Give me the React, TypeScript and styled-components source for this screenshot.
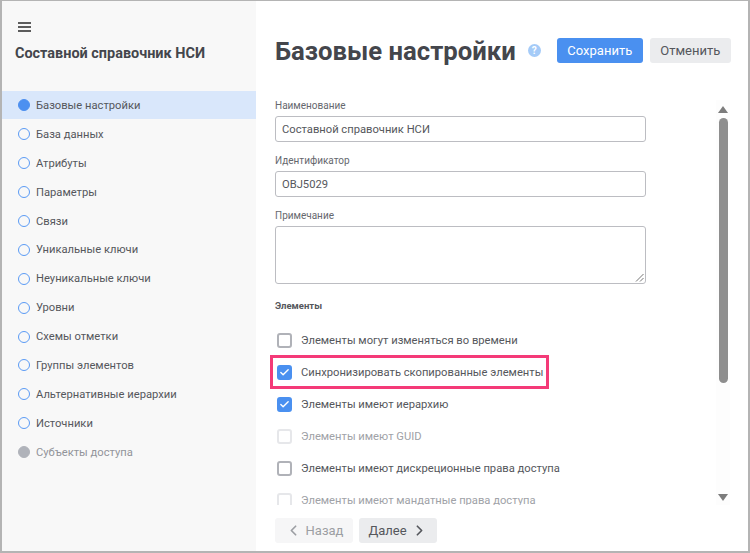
import styled, { createGlobalStyle } from 'styled-components';
import { ChevronLeft, ChevronRight, Check } from 'lucide-react';

const menuItems = [
  'Базовые настройки',
  'База данных',
  'Атрибуты',
  'Параметры',
  'Связи',
  'Уникальные ключи',
  'Неуникальные ключи',
  'Уровни',
  'Схемы отметки',
  'Группы элементов',
  'Альтернативные иерархии',
  'Источники',
  'Субъекты доступа',
];

const options = [
  { label: 'Элементы могут изменяться во времени' },
  { label: 'Синхронизировать скопированные элементы', checked: true, marked: true },
  { label: 'Элементы имеют иерархию', checked: true },
  { label: 'Элементы имеют GUID', disabled: true },
  { label: 'Элементы имеют дискреционные права доступа' },
  { label: 'Элементы имеют мандатные права доступа', disabled: true },
];

function App() {
  return (
    <Window>
      <GlobalStyle />
      <Sidebar>
        <Burger aria-label="Меню">
          <span />
          <span />
          <span />
        </Burger>
        <SideTitle>Составной справочник НСИ</SideTitle>
        <Menu>
          {menuItems.map((item, i) => (
            <MenuItem key={item} $active={i === 0} $disabled={i === menuItems.length - 1}>
              <Dot $active={i === 0} $disabled={i === menuItems.length - 1} />
              {item}
            </MenuItem>
          ))}
        </Menu>
      </Sidebar>
      <Main>
        <Header>
          <Title>Базовые настройки</Title>
          <Help>?</Help>
          <Button $primary>Сохранить</Button>
          <Button>Отменить</Button>
        </Header>
        <Body>
          <Form>
            <Label>Наименование</Label>
            <Input>Составной справочник НСИ</Input>
            <Label>Идентификатор</Label>
            <Input>OBJ5029</Input>
            <Label>Примечание</Label>
            <TextArea>
              <svg width="9" height="9" viewBox="0 0 9 9">
                <path d="M8.5 1 1 8.5M8.5 5 5 8.5" stroke="#777" strokeWidth="1" fill="none" />
              </svg>
            </TextArea>
            <Section>Элементы</Section>
            <Options>
              {options.map((o) => (
                <Option key={o.label} $marked={o.marked} $disabled={o.disabled}>
                  <Box $checked={o.checked} $disabled={o.disabled}>
                    {o.checked && <Check size={11} color="#fff" strokeWidth={3} />}
                  </Box>
                  {o.label}
                </Option>
              ))}
            </Options>
          </Form>
          <Scrollbar>
            <Arrow />
            <Track>
              <Thumb />
            </Track>
            <Arrow $down />
          </Scrollbar>
        </Body>
        <Footer>
          <NavButton $disabled>
            <ChevronLeft size={17} strokeWidth={2.4} />
            Назад
          </NavButton>
          <NavButton>
            Далее
            <ChevronRight size={17} strokeWidth={2.4} />
          </NavButton>
        </Footer>
      </Main>
    </Window>
  );
}

const GlobalStyle = createGlobalStyle`
  html, body {
    margin: 0;
    padding: 0;
    background: #fff;
  }
  * {
    box-sizing: border-box;
  }
`;

const Window = styled.div`
  display: flex;
  width: 750px;
  height: 553px;
  overflow: hidden;
  border: 1px solid #b4b4b4;
  border-left-width: 2px;
  border-right-width: 2px;
  border-bottom-width: 2px;
  font-family: Roboto, 'Liberation Sans', sans-serif;
  color: #4a4c52;
  background: #fff;
`;

const Sidebar = styled.aside`
  display: flex;
  flex-direction: column;
  flex: 0 0 254px;
  padding-top: 21px;
  background: #f8f8f8;
`;

const Burger = styled.div`
  display: flex;
  flex-direction: column;
  gap: 2.5px;
  width: 13px;
  margin-left: 16px;
  span {
    height: 1.5px;
    background: #5c5c5c;
  }
`;

const SideTitle = styled.div`
  margin: 12px 0 0 13px;
  font-size: 14.45px;
  font-weight: 700;
  line-height: 20px;
  color: #44464c;
`;

const Menu = styled.div`
  display: flex;
  flex-direction: column;
  margin-top: 27px;
`;

const MenuItem = styled.div<{ $active?: boolean; $disabled?: boolean }>`
  display: flex;
  align-items: center;
  gap: 6px;
  height: 28.9px;
  padding: 1px 0 0 16px;
  font-size: 11.2px;
  color: ${(p) => (p.$disabled ? '#92949a' : '#55575c')};
  background: ${(p) => (p.$active ? '#d9e7fb' : 'transparent')};
`;

const Dot = styled.span<{ $active?: boolean; $disabled?: boolean }>`
  width: 12px;
  height: 12px;
  border-radius: 50%;
  border: 1.5px solid ${(p) => (p.$disabled ? '#b0b3ba' : '#5b9bf5')};
  background: ${(p) => (p.$disabled ? '#b0b3ba' : p.$active ? '#4d90f0' : 'transparent')};
  ${(p) => p.$active && 'border-color: #4d90f0;'}
`;

const Main = styled.main`
  display: flex;
  flex-direction: column;
  flex: 1;
  min-width: 0;
  padding: 37px 18px 0 19px;
`;

const Header = styled.div`
  display: flex;
  align-items: center;
  height: 25px;
`;

const Title = styled.h1`
  flex: none;
  margin: 0;
  font-size: 25.7px;
  font-weight: 700;
  line-height: 30px;
  white-space: nowrap;
  color: #44464c;
`;

const Help = styled.span`
  display: flex;
  align-items: center;
  justify-content: center;
  flex: none;
  width: 13px;
  height: 13px;
  margin: 0 16px 0 12px;
  border-radius: 50%;
  font-size: 10px;
  font-weight: 700;
  color: #fff;
  background: #a5cbf8;
`;

const Button = styled.div<{ $primary?: boolean }>`
  display: flex;
  align-items: center;
  justify-content: center;
  flex: none;
  height: 25px;
  padding: 0 10.5px;
  margin-right: 7px;
  border-radius: 3px;
  font-size: 13px;
  color: ${(p) => (p.$primary ? '#fff' : '#55575c')};
  background: ${(p) => (p.$primary ? '#4a90f0' : '#ebecee')};
`;

const Body = styled.div`
  display: flex;
  height: 405px;
  margin-top: 37px;
`;

const Form = styled.div`
  display: flex;
  flex-direction: column;
  flex: 0 0 377px;
  height: 405px;
  margin-left: -6px;
  padding-left: 6px;
  overflow: hidden;
`;

const Label = styled.div`
  flex: 0 0 16px;
  font-size: 10px;
  line-height: 12px;
  color: #66686e;
`;

const Input = styled.div`
  display: flex;
  align-items: center;
  flex: 0 0 26px;
  margin-bottom: 13px;
  padding-left: 6px;
  border: 1px solid #bcbdc2;
  border-radius: 3px;
  font-size: 11.2px;
  color: #55575c;
`;

const TextArea = styled.div`
  display: flex;
  align-items: flex-end;
  justify-content: flex-end;
  flex: 0 0 58px;
  border: 1px solid #bcbdc2;
  border-radius: 3px;
  padding: 0 1px 1px 0;
`;

const Section = styled.div`
  flex: none;
  margin-top: 16px;
  font-size: 9.5px;
  font-weight: 700;
  line-height: 12px;
  color: #55575c;
`;

const Options = styled.div`
  display: flex;
  flex-direction: column;
  flex: none;
  margin-top: 12px;
`;

const Option = styled.div<{ $marked?: boolean; $disabled?: boolean }>`
  position: relative;
  display: flex;
  align-items: center;
  gap: 9px;
  flex: 0 0 32px;
  padding-left: 2px;
  font-size: 11.2px;
  color: ${(p) => (p.$disabled ? '#a0a2a7' : '#55575c')};
  ${(p) =>
    p.$marked &&
    `
    &::after {
      content: '';
      position: absolute;
      box-sizing: border-box;
      left: -5px;
      top: -1px;
      width: 279px;
      height: 34px;
      border: 3px solid #f43a78;
    }
  `}
`;

const Box = styled.span<{ $checked?: boolean; $disabled?: boolean }>`
  display: flex;
  align-items: center;
  justify-content: center;
  width: 15px;
  height: 15px;
  border-radius: 3px;
  border: 2px solid ${(p) => (p.$checked ? '#4a90f0' : p.$disabled ? '#e6e7ea' : '#b0b2b8')};
  background: ${(p) => (p.$checked ? '#4a90f0' : '#fff')};
`;

const Scrollbar = styled.div`
  display: flex;
  flex-direction: column;
  align-items: center;
  flex: none;
  width: 14px;
  margin-left: 70px;
  background: #fdfdfd;
`;

const Arrow = styled.span<{ $down?: boolean }>`
  flex: 0 0 18px;
  display: flex;
  align-items: center;
  ${(p) => p.$down && 'padding-top: 3px;'}
  &::before {
    content: '';
    border-left: 5px solid transparent;
    border-right: 5px solid transparent;
    ${(p) => (p.$down ? 'border-top: 7px solid #7c7c7c;' : 'border-bottom: 7px solid #7c7c7c;')}
  }
`;

const Track = styled.div`
  flex: 1;
  width: 9px;
`;

const Thumb = styled.div`
  height: 265px;
  border-radius: 5px;
  background: #8e8e8e;
`;

const Footer = styled.div`
  display: flex;
  gap: 6px;
  margin-top: 13px;
`;

const NavButton = styled.div<{ $disabled?: boolean }>`
  display: flex;
  align-items: center;
  justify-content: center;
  gap: 4px;
  width: 78px;
  height: 25px;
  border-radius: 3px;
  font-size: 13px;
  color: ${(p) => (p.$disabled ? '#9c9ea3' : '#55575c')};
  background: ${(p) => (p.$disabled ? '#f6f6f7' : '#ebecee')};
`;

export default App;
